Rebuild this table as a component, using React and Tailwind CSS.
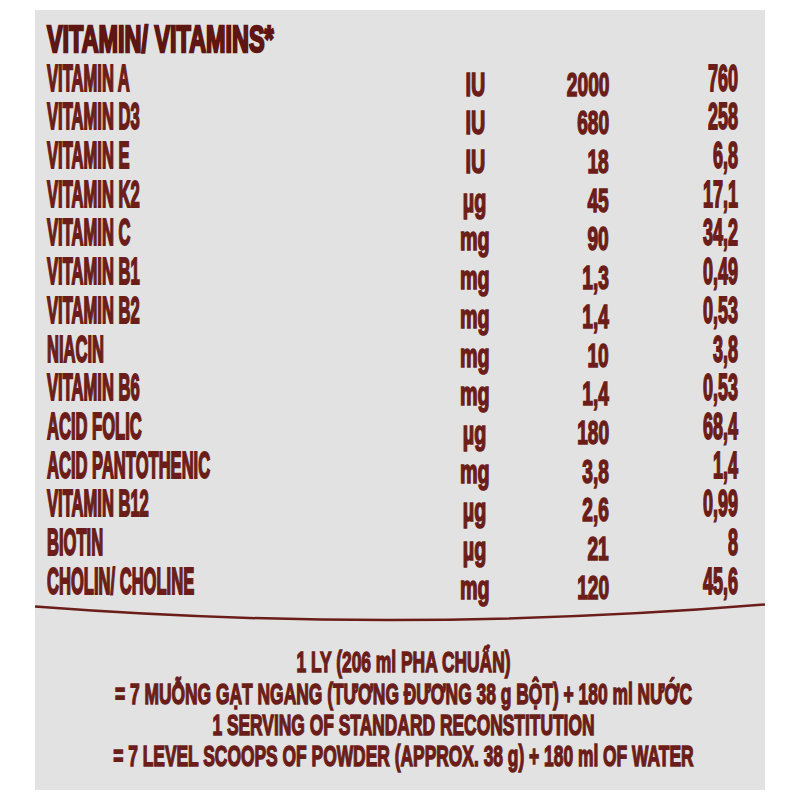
import React from "react";

const rows = [
  ["VITAMIN A", "IU", "2000", "760"],
  ["VITAMIN D3", "IU", "680", "258"],
  ["VITAMIN E", "IU", "18", "6,8"],
  ["VITAMIN K2", "µg", "45", "17,1"],
  ["VITAMIN C", "mg", "90", "34,2"],
  ["VITAMIN B1", "mg", "1,3", "0,49"],
  ["VITAMIN B2", "mg", "1,4", "0,53"],
  ["NIACIN", "mg", "10", "3,8"],
  ["VITAMIN B6", "mg", "1,4", "0,53"],
  ["ACID FOLIC", "µg", "180", "68,4"],
  ["ACID PANTOTHENIC", "mg", "3,8", "1,4"],
  ["VITAMIN B12", "µg", "2,6", "0,99"],
  ["BIOTIN", "µg", "21", "8"],
  ["CHOLIN/ CHOLINE", "mg", "120", "45,6"],
];

const bottom = [
  "1 LY (206 ml PHA CHUẨN)",
  "= 7 MUỖNG GẠT NGANG (TƯƠNG ĐƯƠNG 38 g BỘT) + 180 ml NƯỚC",
  "1 SERVING OF STANDARD RECONSTITUTION",
  "= 7 LEVEL SCOOPS OF POWDER (APPROX. 38 g) + 180 ml OF WATER",
];

export default function App() {
  return (
    <div className="w-[800px] h-[800px] bg-white pt-[10px] pl-[35px] font-['Liberation_Sans',Arial,sans-serif] font-bold text-[#6b1d19] overflow-hidden">
      <div className="w-[730px] h-[780px] bg-[#e2e2e2] pt-[11px] flex flex-col">
        <div className="h-[38.7px] pl-[12px] whitespace-nowrap">
          <span className="inline-block origin-left scale-x-[0.65] text-[36px] leading-[38.7px] text-[#5e1612] [-webkit-text-stroke:2.4px_#5e1612]">
            VITAMIN/ VITAMINS*
          </span>
        </div>
        {rows.map(([name, unit, v100, vServ]) => (
          <div key={name} className="h-[38.7px] flex pl-[12px] whitespace-nowrap">
            <div className="w-[380px]">
              <span className="inline-block origin-left scale-x-[0.46] text-[36px] leading-[38.7px] [-webkit-text-stroke:2px_#6b1d19]">
                {name}
              </span>
            </div>
            <div className="w-[96px] text-center pt-[6px]">
              <span className="inline-block origin-center scale-x-[0.6] text-[33px] leading-[38.7px] [-webkit-text-stroke:1.6px_#6b1d19]">
                {unit}
              </span>
            </div>
            <div className="w-[86px] text-right pt-[6px]">
              <span className="inline-block origin-right scale-x-[0.58] text-[33px] leading-[38.7px] [-webkit-text-stroke:1.6px_#6b1d19]">
                {v100}
              </span>
            </div>
            <div className="w-[129px] text-right">
              <span className="inline-block origin-right scale-x-[0.5] text-[36px] leading-[38.7px] [-webkit-text-stroke:1.8px_#6b1d19]">
                {vServ}
              </span>
            </div>
          </div>
        ))}
        <svg className="block w-[730px] h-[30px]" viewBox="0 0 730 30">
          <path d="M0 5.5 Q365 33.5 730 3.5" fill="none" stroke="#6b1d19" strokeWidth="2.5" />
        </svg>
        <div className="mt-[15px] pl-[6px] flex flex-col whitespace-nowrap">
          {bottom.map((line) => (
            <div key={line} className="h-[31.3px] w-full flex justify-center">
              <span className="inline-block shrink-0 origin-center scale-x-[0.58] text-[30px] leading-[31.3px] [-webkit-text-stroke:1.5px_#6b1d19]">
                {line}
              </span>
            </div>
          ))}
        </div>
      </div>
    </div>
  );
}
